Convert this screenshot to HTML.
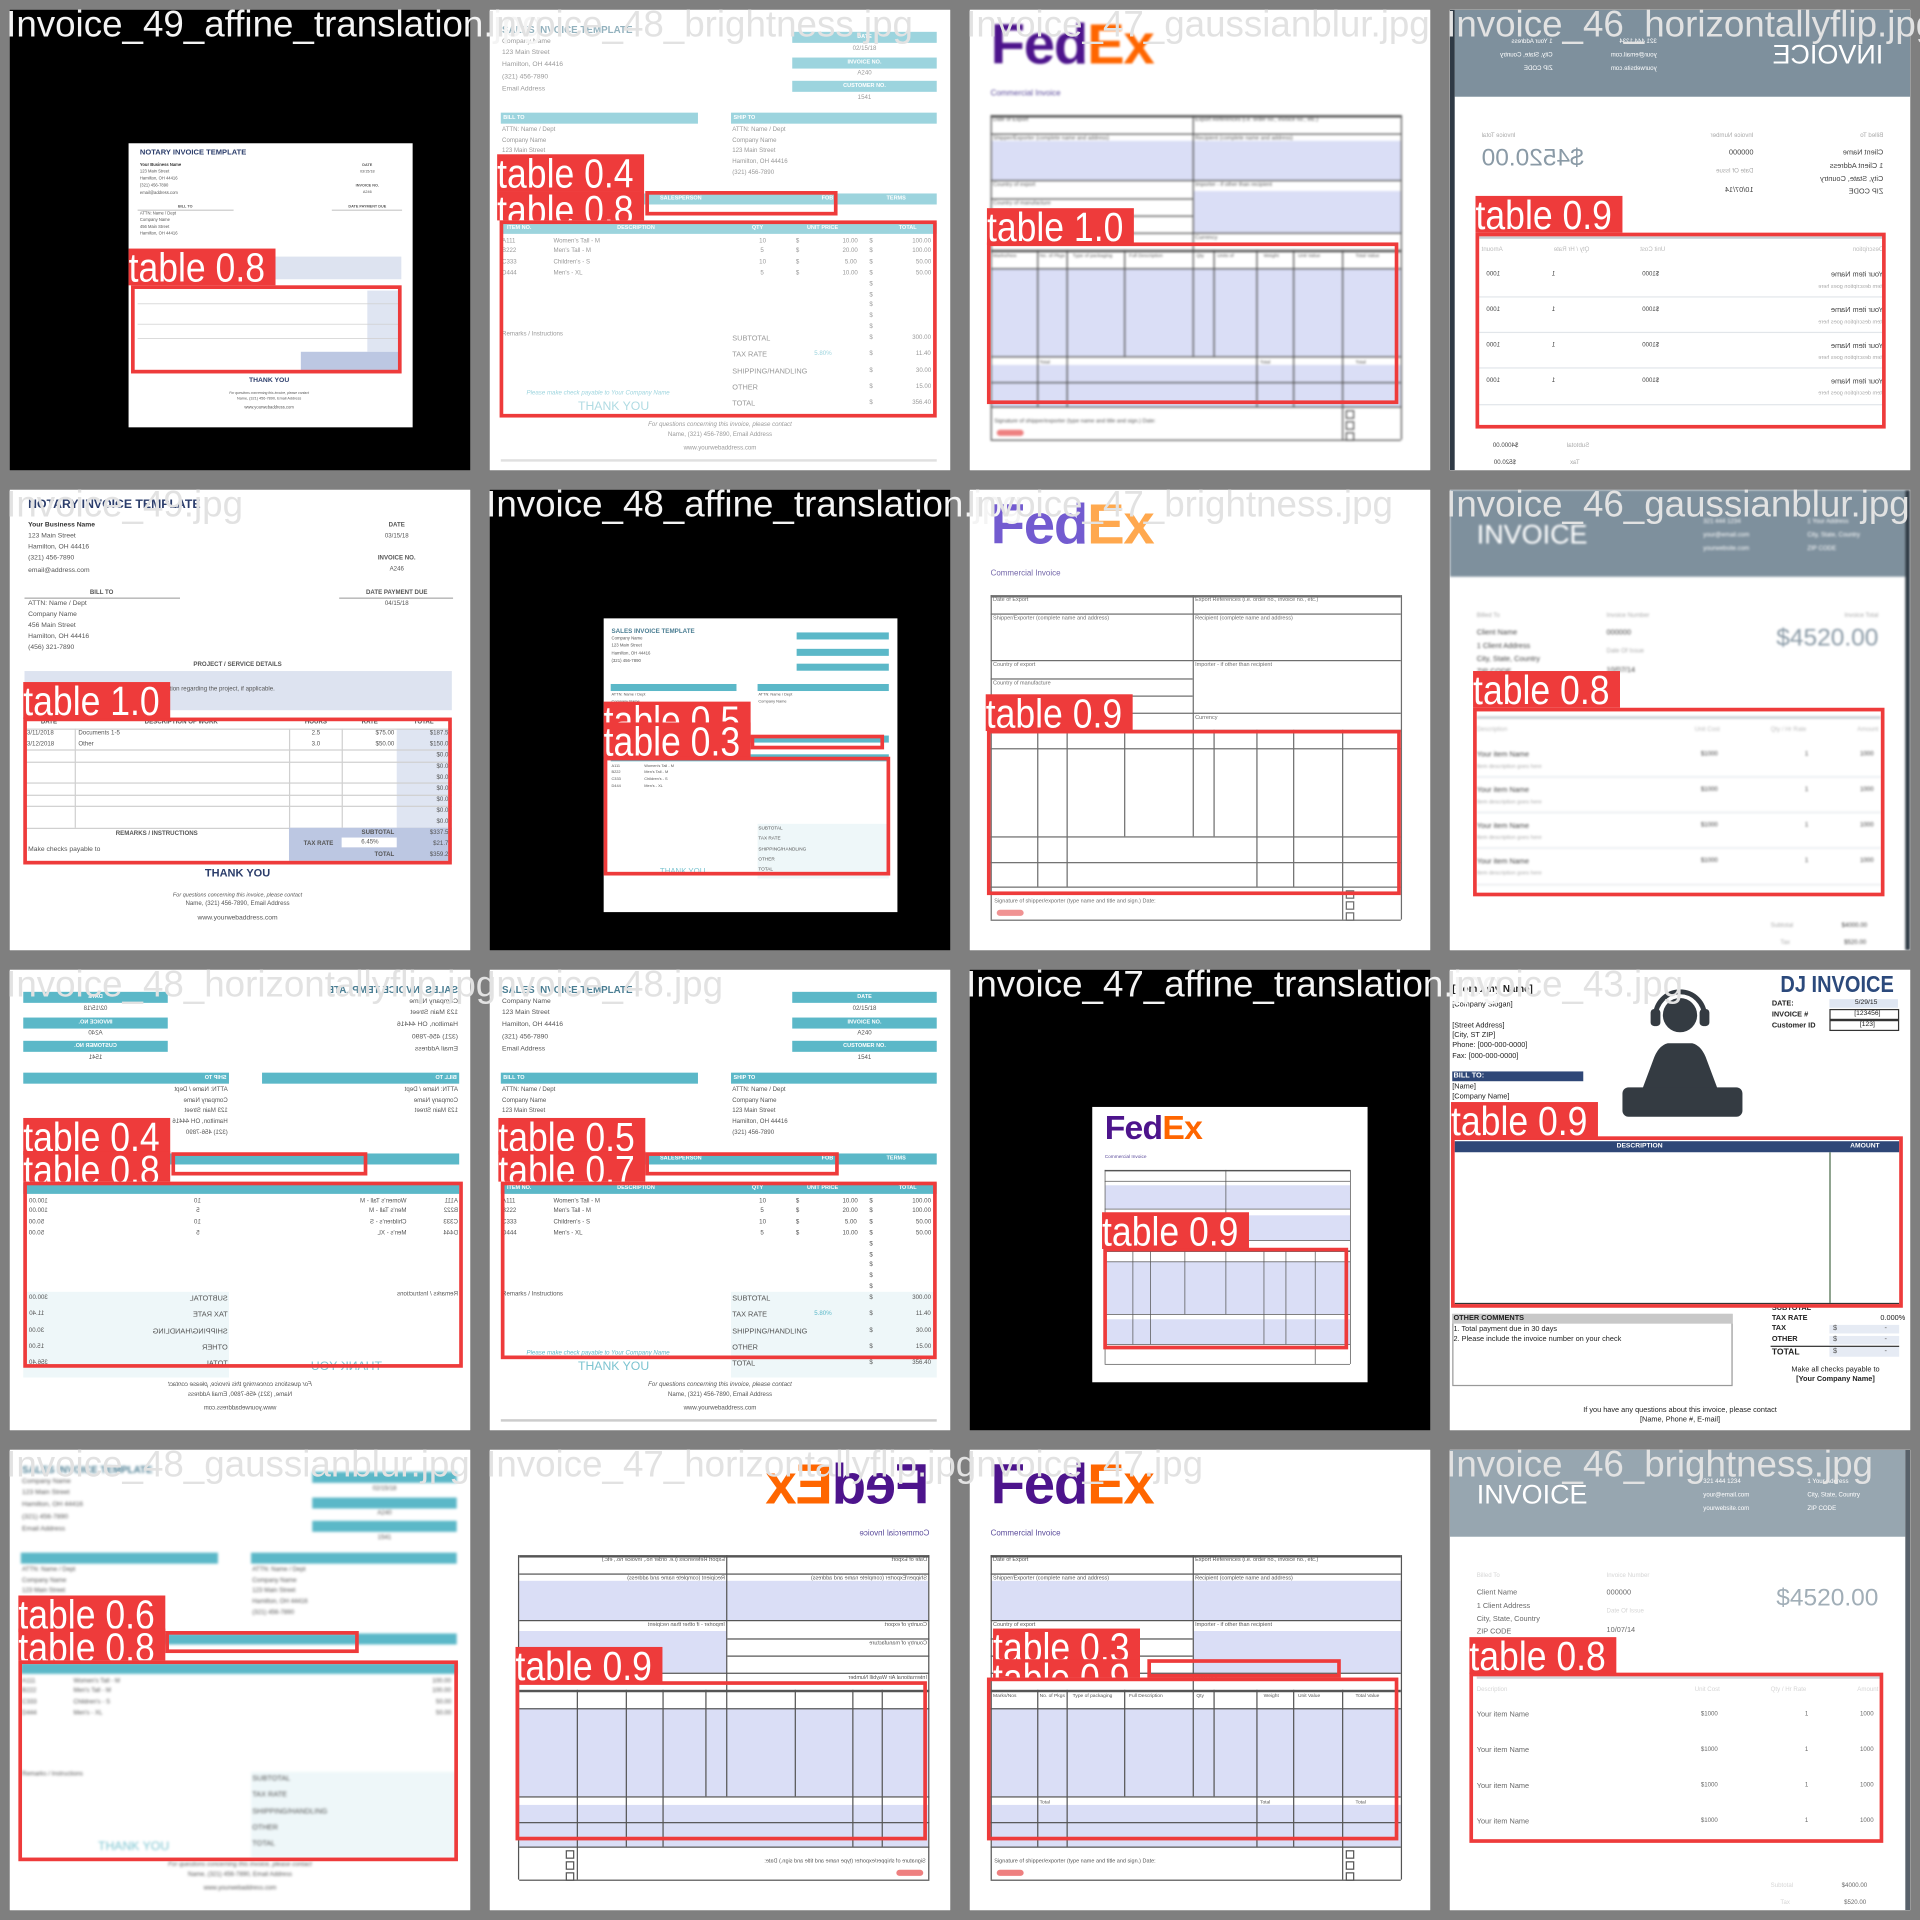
<!DOCTYPE html>
<html><head><meta charset="utf-8">
<style>
html,body{margin:0;padding:0;width:1920px;height:1920px;overflow:hidden;background:#7f7f7f}
#W{position:absolute;left:0;top:0;width:1568px;height:1568px;transform:scale(1.22449);transform-origin:0 0;background:#7f7f7f}
.cell{position:absolute;width:376px;height:376px;overflow:hidden;background:#fff}
.doc{position:absolute;left:0;top:0;width:376px;height:376px;background:#fff;overflow:hidden}
.t{position:absolute;white-space:nowrap;font-family:"Liberation Sans",sans-serif;font-size:5px;line-height:1;color:#555}
.c{transform:translateX(-50%)}
.r{position:absolute}
.bx{position:absolute;border:3px solid #ee3b3b;box-sizing:border-box}
.lab{position:absolute;width:120px;height:30px;background:#ee3b3b;overflow:hidden;color:#fff;font:33px/31px "Liberation Sans",sans-serif;white-space:nowrap}
.lab span{display:inline-block;transform:scaleX(.88);transform-origin:0 0}
.ttl{position:absolute;font:30px/1 "Liberation Sans",sans-serif;color:#e2e2e2;white-space:nowrap}
.tb{background:#5bb8c8}
.tb .t{color:#fff;font-weight:bold;font-size:4.5px}
.lav{background:#dadef6}
.ln{background:#555}
.g{background:#d0d0d0}
</style></head><body><div id="W">

<!-- ROW 0 -->
<div class="cell" style="left:8px;top:8px;background:#000">
 <div style="position:absolute;left:97px;top:109px;width:376px;height:376px;transform:scale(.617);transform-origin:0 0">
  <div class="doc">
   <div class="t" style="left:15px;top:8px;font-weight:bold;font-size:10px;color:#2b3d6b">NOTARY INVOICE TEMPLATE</div>
   <div class="t" style="left:15px;top:27px;font-weight:bold;font-size:5.5px;color:#333">Your Business Name</div>
   <div class="t" style="left:15px;top:36px;font-size:5.5px">123 Main Street</div>
   <div class="t" style="left:15px;top:45px;font-size:5.5px">Hamilton, OH 44416</div>
   <div class="t" style="left:15px;top:54px;font-size:5.5px">(321) 456-7890</div>
   <div class="t" style="left:15px;top:64px;font-size:5.5px">email@address.com</div>
   <div class="t c" style="left:316px;top:27px;font-weight:bold">DATE</div><div class="t c" style="left:316px;top:36px">03/15/18</div>
   <div class="t c" style="left:316px;top:54px;font-weight:bold">INVOICE NO.</div><div class="t c" style="left:316px;top:63px">A246</div>
   <div class="t c" style="left:75px;top:82px;font-weight:bold">BILL TO</div><div class="r" style="left:12px;top:88px;width:127px;height:1px;background:#aaa"></div>
   <div class="t c" style="left:316px;top:82px;font-weight:bold">DATE PAYMENT DUE</div><div class="r" style="left:269px;top:88px;width:93px;height:1px;background:#aaa"></div>
   <div class="t" style="left:15px;top:91px;font-size:5.5px">ATTN: Name / Dept</div>
   <div class="t" style="left:15px;top:100px;font-size:5.5px">Company Name</div>
   <div class="t" style="left:15px;top:109px;font-size:5.5px">456 Main Street</div>
   <div class="t" style="left:15px;top:118px;font-size:5.5px">Hamilton, OH 44416</div>
   <div class="r" style="left:12px;top:150px;width:349px;height:30px;background:#dde3f0"></div>
   <div class="r" style="left:316px;top:195px;width:45px;height:81px;background:#dfe5f2"></div>
   <div class="r g" style="left:12px;top:212px;width:349px;height:1px"></div>
   <div class="r g" style="left:12px;top:239px;width:349px;height:1px"></div>
   <div class="r g" style="left:12px;top:258px;width:349px;height:1px"></div>
   <div class="r" style="left:228px;top:276px;width:133px;height:27px;background:#bcc7e2"></div>
   <div class="t c" style="left:186px;top:309px;font-weight:bold;font-size:9px;color:#2b3d6b">THANK YOU</div>
   <div class="t c" style="left:186px;top:329px;font-style:italic;font-size:4.5px">For questions concerning this invoice, please contact</div>
   <div class="t c" style="left:186px;top:336px">Name, (321) 456-7890, Email Address</div>
   <div class="t c" style="left:186px;top:348px;font-size:5.5px">www.yourwebaddress.com</div>
  </div>
 </div>
 <div class="bx" style="left:99px;top:225px;width:221px;height:72px"></div>
 <div class="lab" style="left:97px;top:195px"><span>table 0.8</span></div>
</div>

<div class="cell" style="left:400px;top:8px">
 <div style="opacity:.6">
 <div class="doc">
  <div class="t" style="left:10px;top:13px;font-weight:bold;font-size:8px;color:#4a7d92">SALES INVOICE TEMPLATE</div>
  <div class="t" style="left:10px;top:24px;font-size:5.5px">Company Name</div>
  <div class="t" style="left:10px;top:33px;font-size:5.5px">123 Main Street</div>
  <div class="t" style="left:10px;top:43px;font-size:5.5px">Hamilton, OH 44416</div>
  <div class="t" style="left:10px;top:53px;font-size:5.5px">(321) 456-7890</div>
  <div class="t" style="left:10px;top:63px;font-size:5.5px">Email Address</div>
  <div class="r tb" style="left:247px;top:18px;width:118px;height:9px"><div class="t c" style="left:59px;top:2px">DATE</div></div>
  <div class="r tb" style="left:247px;top:39px;width:118px;height:9px"><div class="t c" style="left:59px;top:2px">INVOICE NO.</div></div>
  <div class="r tb" style="left:247px;top:58px;width:118px;height:9px"><div class="t c" style="left:59px;top:2px">CUSTOMER NO.</div></div>
  <div class="t c" style="left:306px;top:30px">02/15/18</div>
  <div class="t c" style="left:306px;top:50px">A240</div>
  <div class="t c" style="left:306px;top:70px">1541</div>
  <div class="r tb" style="left:9px;top:84px;width:161px;height:9px"><div class="t" style="left:2px;top:2px">BILL TO</div></div>
  <div class="r tb" style="left:197px;top:84px;width:168px;height:9px"><div class="t" style="left:2px;top:2px">SHIP TO</div></div>
  <div class="t" style="left:10px;top:96px">ATTN: Name / Dept</div><div class="t" style="left:198px;top:96px">ATTN: Name / Dept</div>
  <div class="t" style="left:10px;top:105px">Company Name</div><div class="t" style="left:198px;top:105px">Company Name</div>
  <div class="t" style="left:10px;top:113px">123 Main Street</div><div class="t" style="left:198px;top:113px">123 Main Street</div>
  <div class="t" style="left:198px;top:122px">Hamilton, OH 44416</div>
  <div class="t" style="left:198px;top:131px">(321) 456-7890</div>
  <div class="r tb" style="left:9px;top:150px;width:356px;height:9px"><div class="t" style="left:60px;top:2px">SHIP VIA</div><div class="t" style="left:130px;top:2px">SALESPERSON</div><div class="t" style="left:262px;top:2px">FOB</div><div class="t" style="left:315px;top:2px">TERMS</div></div>
  <div class="r tb" style="left:9px;top:174px;width:356px;height:9px"><div class="t" style="left:5px;top:2px">ITEM NO.</div><div class="t" style="left:95px;top:2px">DESCRIPTION</div><div class="t" style="left:205px;top:2px">QTY</div><div class="t" style="left:250px;top:2px">UNIT PRICE</div><div class="t" style="left:325px;top:2px">TOTAL</div></div>
  <div class="t" style="left:10px;top:187px">A111</div><div class="t" style="left:52px;top:187px">Women's Tall - M</div><div class="t" style="left:220px;top:187px">10</div><div class="t" style="left:250px;top:187px">$</div><div class="t" style="left:288px;top:187px">10.00</div><div class="t" style="left:310px;top:187px">$</div><div class="t" style="left:345px;top:187px">100.00</div>
  <div class="t" style="left:10px;top:195px">B222</div><div class="t" style="left:52px;top:195px">Men's Tall - M</div><div class="t" style="left:221px;top:195px">5</div><div class="t" style="left:250px;top:195px">$</div><div class="t" style="left:288px;top:195px">20.00</div><div class="t" style="left:310px;top:195px">$</div><div class="t" style="left:345px;top:195px">100.00</div>
  <div class="t" style="left:10px;top:204px">C333</div><div class="t" style="left:52px;top:204px">Children's - S</div><div class="t" style="left:220px;top:204px">10</div><div class="t" style="left:250px;top:204px">$</div><div class="t" style="left:290px;top:204px">5.00</div><div class="t" style="left:310px;top:204px">$</div><div class="t" style="left:348px;top:204px">50.00</div>
  <div class="t" style="left:10px;top:213px">D444</div><div class="t" style="left:52px;top:213px">Men's - XL</div><div class="t" style="left:221px;top:213px">5</div><div class="t" style="left:250px;top:213px">$</div><div class="t" style="left:288px;top:213px">10.00</div><div class="t" style="left:310px;top:213px">$</div><div class="t" style="left:348px;top:213px">50.00</div>
  <div class="t" style="left:310px;top:222px">$</div><div class="t" style="left:310px;top:231px">$</div><div class="t" style="left:310px;top:239px">$</div><div class="t" style="left:310px;top:248px">$</div><div class="t" style="left:310px;top:257px">$</div>
  <div class="t" style="left:10px;top:263px">Remarks / Instructions</div>
  <div class="t" style="left:198px;top:266px;font-size:6px">SUBTOTAL</div><div class="t" style="left:310px;top:266px">$</div><div class="t" style="left:345px;top:266px">300.00</div>
  <div class="t" style="left:198px;top:279px;font-size:6px">TAX RATE</div><div class="t" style="left:265px;top:279px;color:#5bb8c8">5.80%</div><div class="t" style="left:310px;top:279px">$</div><div class="t" style="left:348px;top:279px">11.40</div>
  <div class="t" style="left:198px;top:293px;font-size:6px">SHIPPING/HANDLING</div><div class="t" style="left:310px;top:293px">$</div><div class="t" style="left:348px;top:293px">30.00</div>
  <div class="t" style="left:198px;top:306px;font-size:6px">OTHER</div><div class="t" style="left:310px;top:306px">$</div><div class="t" style="left:348px;top:306px">15.00</div>
  <div class="t" style="left:198px;top:319px;font-size:6px">TOTAL</div><div class="t" style="left:310px;top:319px">$</div><div class="t" style="left:345px;top:319px">356.40</div>
  <div class="t" style="left:30px;top:311px;font-style:italic;color:#5bb8c8">Please make check payable to Your Company Name</div>
  <div class="t" style="left:72px;top:320px;font-size:10px;color:#7cc4d0">THANK YOU</div>
  <div class="t c" style="left:188px;top:337px;font-style:italic">For questions concerning this invoice, please contact</div>
  <div class="t c" style="left:188px;top:345px">Name, (321) 456-7890, Email Address</div>
  <div class="t c" style="left:188px;top:356px">www.yourwebaddress.com</div>
  <div class="r" style="left:9px;top:367px;width:356px;height:2px;background:#ccc"></div>
 </div></div>
 <div class="lab" style="left:6px;top:118px"><span>table 0.4</span></div>
 <div class="lab" style="left:6px;top:148px;height:24px"><span>table 0.8</span></div>
 <div class="bx" style="left:127px;top:148px;width:157px;height:20px"></div>
 <div class="bx" style="left:8px;top:172px;width:357px;height:161px"></div>
</div>

<div class="cell" style="left:792px;top:8px">
 <div class="doc" style="filter:blur(.9px)">
  <div class="t" style="left:17px;top:5px;font:bold 46px/1 'Liberation Sans',sans-serif;letter-spacing:-1px"><span style="color:#4d148c">Fed</span><span style="color:#ff6600">Ex</span></div>
  <div class="t" style="left:17px;top:66px;font-size:6.5px;color:#5a4a9a">Commercial Invoice</div>
  <div class="r lav" style="left:18px;top:107px;width:334px;height:32px"></div>
  <div class="r lav" style="left:183px;top:148px;width:169px;height:34px"></div>
  <div class="r lav" style="left:18px;top:211px;width:334px;height:72px"></div>
  <div class="r lav" style="left:18px;top:290px;width:334px;height:34px"></div>
  <div class="r ln" style="left:17px;top:86px;width:335px;height:2px"></div>
  <div class="r ln" style="left:17px;top:101px;width:335px;height:1px"></div>
  <div class="r ln" style="left:17px;top:139px;width:335px;height:1px"></div>
  <div class="r ln" style="left:17px;top:154px;width:165px;height:1px"></div>
  <div class="r ln" style="left:17px;top:168px;width:165px;height:1px"></div>
  <div class="r ln" style="left:17px;top:182px;width:335px;height:1px"></div>
  <div class="r ln" style="left:17px;top:196px;width:335px;height:2px"></div>
  <div class="r ln" style="left:17px;top:211px;width:335px;height:1px"></div>
  <div class="r ln" style="left:17px;top:283px;width:335px;height:1px"></div>
  <div class="r ln" style="left:17px;top:304px;width:335px;height:1px"></div>
  <div class="r ln" style="left:17px;top:324px;width:335px;height:1px"></div>
  <div class="r ln" style="left:17px;top:351px;width:335px;height:1px"></div>
  <div class="r ln" style="left:17px;top:86px;width:1px;height:265px"></div>
  <div class="r ln" style="left:352px;top:86px;width:1px;height:265px"></div>
  <div class="r ln" style="left:182px;top:86px;width:1px;height:197px"></div>
  <div class="r ln" style="left:55px;top:196px;width:1px;height:128px"></div>
  <div class="r ln" style="left:79px;top:196px;width:1px;height:128px"></div>
  <div class="r ln" style="left:126px;top:196px;width:1px;height:87px"></div>
  <div class="r ln" style="left:199px;top:196px;width:1px;height:87px"></div>
  <div class="r ln" style="left:234px;top:196px;width:1px;height:128px"></div>
  <div class="r ln" style="left:264px;top:196px;width:1px;height:128px"></div>
  <div class="r ln" style="left:304px;top:196px;width:1px;height:155px"></div>
  <div class="t" style="left:19px;top:88px;font-size:4.5px">Date of Export</div>
  <div class="t" style="left:184px;top:88px;font-size:4.5px">Export References (i.e. order no., invoice no., etc.)</div>
  <div class="t" style="left:19px;top:103px;font-size:4.5px">Shipper/Exporter (complete name and address)</div>
  <div class="t" style="left:184px;top:103px;font-size:4.5px">Recipient (complete name and address)</div>
  <div class="t" style="left:19px;top:141px;font-size:4.5px">Country of export</div>
  <div class="t" style="left:184px;top:141px;font-size:4.5px">Importer - if other than recipient</div>
  <div class="t" style="left:19px;top:156px;font-size:4.5px">Country of manufacture</div>
  <div class="t" style="left:19px;top:170px;font-size:4.5px">Country of ultimate destination</div>
  <div class="t" style="left:19px;top:184px;font-size:4.5px">International Air Waybill Number</div>
  <div class="t" style="left:184px;top:184px;font-size:4.5px">Currency</div>
  <div class="t" style="left:19px;top:199px;font-size:4px">Marks/Nos</div><div class="t" style="left:57px;top:199px;font-size:4px">No. of Pkgs</div><div class="t" style="left:84px;top:199px;font-size:4px">Type of packaging</div><div class="t" style="left:130px;top:199px;font-size:4px">Full Description</div><div class="t" style="left:185px;top:199px;font-size:4px">Qty</div><div class="t" style="left:202px;top:199px;font-size:4px">Units of</div><div class="t" style="left:240px;top:199px;font-size:4px">Weight</div><div class="t" style="left:268px;top:199px;font-size:4px">Unit Value</div><div class="t" style="left:315px;top:199px;font-size:4px">Total Value</div>
  <div class="t" style="left:57px;top:286px;font-size:4px">Total</div><div class="t" style="left:237px;top:286px;font-size:4px">Total</div><div class="t" style="left:315px;top:286px;font-size:4px">Total</div>
  <div class="t" style="left:20px;top:334px;font-size:4.5px">Signature of shipper/exporter (type name and title and sign.)  Date:</div>
  <div class="r" style="left:22px;top:343px;width:22px;height:5px;border-radius:3px;background:#ee8080"></div>
  <div class="r" style="left:307px;top:327px;width:5px;height:5px;border:1px solid #555"></div>
  <div class="r" style="left:307px;top:336px;width:5px;height:5px;border:1px solid #555"></div>
  <div class="r" style="left:307px;top:345px;width:5px;height:5px;border:1px solid #555"></div>
 </div>
 <div class="bx" style="left:14px;top:190px;width:336px;height:132px"></div>
 <div class="lab" style="left:14px;top:162px"><span>table 1.0</span></div>
</div>

<div class="cell" style="left:1184px;top:8px">
 <div style="position:absolute;left:0;top:0;width:376px;height:376px;transform:scaleX(-1)">
 <div class="doc">
  <div class="r" style="left:0;top:0;width:372px;height:71px;background:#7e909d"></div>
  <div class="r" style="left:372px;top:0;width:4px;height:376px;background:#2f3a45"></div>
  <div class="t" style="left:22px;top:26px;font-size:22px;color:#fff">INVOICE</div>
  <div class="t" style="left:207px;top:24px;color:#fff">321 444 1234</div><div class="t" style="left:207px;top:35px;color:#fff">your@email.com</div><div class="t" style="left:207px;top:46px;color:#fff">yourwebsite.com</div>
  <div class="t" style="left:292px;top:24px;color:#fff">1 Your Address</div><div class="t" style="left:292px;top:35px;color:#fff">City, State, Country</div><div class="t" style="left:292px;top:46px;color:#fff">ZIP CODE</div>
  <div class="t" style="left:22px;top:101px;color:#aaa">Billed To</div><div class="t" style="left:22px;top:114px;font-size:6px;color:#444">Client Name</div><div class="t" style="left:22px;top:125px;font-size:6px;color:#444">1 Client Address</div><div class="t" style="left:22px;top:136px;font-size:6px;color:#444">City, State, Country</div><div class="t" style="left:22px;top:146px;font-size:6px;color:#444">ZIP CODE</div>
  <div class="t" style="left:128px;top:101px;color:#aaa">Invoice Number</div><div class="t" style="left:128px;top:114px;font-size:6px;color:#444">000000</div><div class="t" style="left:128px;top:130px;color:#aaa">Date Of Issue</div><div class="t" style="left:128px;top:145px;font-size:6px;color:#444">10/07/14</div>
  <div class="t" style="right:26px;top:101px;color:#aaa">Invoice Total</div>
  <div class="t" style="right:26px;top:111px;font-size:20px;color:#8a9aa6">$4520.00</div>
  <div class="r" style="left:22px;top:185px;width:330px;height:2px;background:#c6ced4"></div>
  <div class="t" style="left:22px;top:194px;color:#bbb">Description</div><div class="t" style="left:200px;top:194px;color:#bbb">Unit Cost</div><div class="t" style="left:262px;top:194px;color:#bbb">Qty / Hr Rate</div><div class="t" style="right:26px;top:194px;color:#bbb">Amount</div>
  <div class="t" style="left:22px;top:214px;font-size:6px;color:#444">Your item Name</div><div class="t" style="left:22px;top:224px;font-size:4.5px;color:#aaa">Item description goes here</div><div class="t" style="left:205px;top:214px;color:#444">$1000</div><div class="t" style="left:290px;top:214px;color:#444">1</div><div class="t" style="left:335px;top:214px;color:#444">1000</div>
  <div class="r" style="left:22px;top:234px;width:330px;height:1px;background:#e2e6ea"></div>
  <div class="t" style="left:22px;top:243px;font-size:6px;color:#444">Your item Name</div><div class="t" style="left:22px;top:253px;font-size:4.5px;color:#aaa">Item description goes here</div><div class="t" style="left:205px;top:243px;color:#444">$1000</div><div class="t" style="left:290px;top:243px;color:#444">1</div><div class="t" style="left:335px;top:243px;color:#444">1000</div>
  <div class="r" style="left:22px;top:263px;width:330px;height:1px;background:#e2e6ea"></div>
  <div class="t" style="left:22px;top:272px;font-size:6px;color:#444">Your item Name</div><div class="t" style="left:22px;top:282px;font-size:4.5px;color:#aaa">Item description goes here</div><div class="t" style="left:205px;top:272px;color:#444">$1000</div><div class="t" style="left:290px;top:272px;color:#444">1</div><div class="t" style="left:335px;top:272px;color:#444">1000</div>
  <div class="r" style="left:22px;top:292px;width:330px;height:1px;background:#e2e6ea"></div>
  <div class="t" style="left:22px;top:301px;font-size:6px;color:#444">Your item Name</div><div class="t" style="left:22px;top:311px;font-size:4.5px;color:#aaa">Item description goes here</div><div class="t" style="left:205px;top:301px;color:#444">$1000</div><div class="t" style="left:290px;top:301px;color:#444">1</div><div class="t" style="left:335px;top:301px;color:#444">1000</div>
  <div class="r" style="left:22px;top:322px;width:330px;height:1px;background:#e2e6ea"></div>
  <div class="t" style="left:262px;top:354px;color:#aaa">Subtotal</div><div class="t" style="left:320px;top:354px;color:#444">$4000.00</div>
  <div class="t" style="left:270px;top:368px;color:#aaa">Tax</div><div class="t" style="left:322px;top:368px;color:#444">$520.00</div>
 </div></div>
 <div class="bx" style="left:21px;top:182px;width:335px;height:160px"></div>
 <div class="lab" style="left:21px;top:152px"><span>table 0.9</span></div>
</div>

<!-- ROW 1 -->
<div class="cell" style="left:8px;top:400px">
 <div class="doc">
  <div class="t" style="left:15px;top:8px;font-weight:bold;font-size:10px;color:#2b3d6b">NOTARY INVOICE TEMPLATE</div>
  <div class="t" style="left:15px;top:27px;font-weight:bold;font-size:5.5px;color:#333">Your Business Name</div>
  <div class="t" style="left:15px;top:36px;font-size:5.5px">123 Main Street</div>
  <div class="t" style="left:15px;top:45px;font-size:5.5px">Hamilton, OH 44416</div>
  <div class="t" style="left:15px;top:54px;font-size:5.5px">(321) 456-7890</div>
  <div class="t" style="left:15px;top:64px;font-size:5.5px">email@address.com</div>
  <div class="t c" style="left:316px;top:27px;font-weight:bold">DATE</div><div class="t c" style="left:316px;top:36px">03/15/18</div>
  <div class="t c" style="left:316px;top:54px;font-weight:bold">INVOICE NO.</div><div class="t c" style="left:316px;top:63px">A246</div>
  <div class="t c" style="left:75px;top:82px;font-weight:bold">BILL TO</div><div class="r" style="left:12px;top:88px;width:127px;height:1px;background:#aaa"></div>
  <div class="t c" style="left:316px;top:82px;font-weight:bold">DATE PAYMENT DUE</div><div class="r" style="left:269px;top:88px;width:93px;height:1px;background:#aaa"></div>
  <div class="t c" style="left:316px;top:91px">04/15/18</div>
  <div class="t" style="left:15px;top:91px;font-size:5.5px">ATTN: Name / Dept</div>
  <div class="t" style="left:15px;top:100px;font-size:5.5px">Company Name</div>
  <div class="t" style="left:15px;top:109px;font-size:5.5px">456 Main Street</div>
  <div class="t" style="left:15px;top:118px;font-size:5.5px">Hamilton, OH 44416</div>
  <div class="t" style="left:15px;top:127px;font-size:5.5px">(456) 321-7890</div>
  <div class="t c" style="left:186px;top:141px;font-weight:bold">PROJECT / SERVICE DETAILS</div>
  <div class="r" style="left:12px;top:148px;width:349px;height:32px;background:#dde3f0"></div>
  <div class="t" style="left:100px;top:161px">Insert information regarding the project, if applicable.</div>
  <div class="t c" style="left:32px;top:188px;font-weight:bold">DATE</div><div class="t c" style="left:140px;top:188px;font-weight:bold">DESCRIPTION OF WORK</div><div class="t c" style="left:250px;top:188px;font-weight:bold">HOURS</div><div class="t c" style="left:294px;top:188px;font-weight:bold">RATE</div><div class="t c" style="left:338px;top:188px;font-weight:bold">TOTAL</div>
  <div class="r" style="left:316px;top:195px;width:45px;height:81px;background:#dfe5f2"></div>
  <div class="r g" style="left:12px;top:195px;width:349px;height:1px"></div>
  <div class="r g" style="left:12px;top:212px;width:349px;height:1px"></div>
  <div class="r g" style="left:12px;top:222px;width:349px;height:1px"></div>
  <div class="r g" style="left:12px;top:239px;width:349px;height:1px"></div>
  <div class="r g" style="left:12px;top:249px;width:349px;height:1px"></div>
  <div class="r g" style="left:12px;top:258px;width:349px;height:1px"></div>
  <div class="r g" style="left:12px;top:276px;width:349px;height:1px"></div>
  <div class="r g" style="left:53px;top:195px;width:1px;height:81px"></div>
  <div class="r g" style="left:228px;top:195px;width:1px;height:81px"></div>
  <div class="r g" style="left:271px;top:195px;width:1px;height:81px"></div>
  <div class="t" style="left:14px;top:197px">3/11/2018</div><div class="t" style="left:56px;top:197px">Documents 1-5</div><div class="t c" style="left:250px;top:197px">2.5</div><div class="t" style="right:62px;top:197px">$75.00</div><div class="t" style="right:15px;top:197px">$187.50</div>
  <div class="t" style="left:14px;top:206px">3/12/2018</div><div class="t" style="left:56px;top:206px">Other</div><div class="t c" style="left:250px;top:206px">3.0</div><div class="t" style="right:62px;top:206px">$50.00</div><div class="t" style="right:15px;top:206px">$150.00</div>
  <div class="t" style="right:15px;top:215px">$0.00</div><div class="t" style="right:15px;top:224px">$0.00</div><div class="t" style="right:15px;top:233px">$0.00</div><div class="t" style="right:15px;top:242px">$0.00</div><div class="t" style="right:15px;top:251px">$0.00</div><div class="t" style="right:15px;top:260px">$0.00</div><div class="t" style="right:15px;top:269px">$0.00</div>
  <div class="r" style="left:228px;top:276px;width:133px;height:27px;background:#bcc7e2"></div>
  <div class="r" style="left:271px;top:284px;width:45px;height:8px;background:#fff"></div>
  <div class="t" style="right:62px;top:278px;font-weight:bold">SUBTOTAL</div><div class="t" style="left:240px;top:287px;font-weight:bold">TAX RATE</div><div class="t" style="left:287px;top:286px">6.45%</div><div class="t" style="right:62px;top:296px;font-weight:bold">TOTAL</div>
  <div class="t" style="right:15px;top:278px">$337.50</div><div class="t" style="right:15px;top:287px">$21.77</div><div class="t" style="right:15px;top:296px">$359.27</div>
  <div class="t c" style="left:120px;top:279px;font-weight:bold">REMARKS / INSTRUCTIONS</div>
  <div class="t" style="left:15px;top:292px;font-size:5.5px">Make checks payable to</div>
  <div class="t c" style="left:186px;top:309px;font-weight:bold;font-size:9px;color:#2b3d6b">THANK YOU</div>
  <div class="t c" style="left:186px;top:329px;font-style:italic;font-size:4.5px">For questions concerning this invoice, please contact</div>
  <div class="t c" style="left:186px;top:336px">Name, (321) 456-7890, Email Address</div>
  <div class="t c" style="left:186px;top:348px;font-size:5.5px">www.yourwebaddress.com</div>
 </div>
 <div class="bx" style="left:11px;top:186px;width:350px;height:120px"></div>
 <div class="lab" style="left:11px;top:157px"><span>table 1.0</span></div>
</div>

<div class="cell" style="left:400px;top:400px;background:#000">
 <div style="position:absolute;left:93px;top:105px;width:376px;height:376px;transform:scale(.638);transform-origin:0 0">
 <div class="doc">
  <div class="t" style="left:10px;top:13px;font-weight:bold;font-size:8px;color:#4a7d92">SALES INVOICE TEMPLATE</div>
  <div class="t" style="left:10px;top:24px;font-size:5.5px">Company Name</div>
  <div class="t" style="left:10px;top:33px;font-size:5.5px">123 Main Street</div>
  <div class="t" style="left:10px;top:43px;font-size:5.5px">Hamilton, OH 44416</div>
  <div class="t" style="left:10px;top:53px;font-size:5.5px">(321) 456-7890</div>
  <div class="r tb" style="left:247px;top:18px;width:118px;height:9px"></div>
  <div class="r tb" style="left:247px;top:39px;width:118px;height:9px"></div>
  <div class="r tb" style="left:247px;top:58px;width:118px;height:9px"></div>
  <div class="r tb" style="left:9px;top:84px;width:161px;height:9px"></div>
  <div class="r tb" style="left:197px;top:84px;width:168px;height:9px"></div>
  <div class="t" style="left:10px;top:96px">ATTN: Name / Dept</div><div class="t" style="left:198px;top:96px">ATTN: Name / Dept</div>
  <div class="t" style="left:10px;top:105px">Company Name</div><div class="t" style="left:198px;top:105px">Company Name</div>
  <div class="r tb" style="left:9px;top:150px;width:356px;height:9px"></div>
  <div class="r tb" style="left:9px;top:174px;width:356px;height:9px"></div>
  <div class="t" style="left:10px;top:187px">A111</div><div class="t" style="left:52px;top:187px">Women's Tall - M</div>
  <div class="t" style="left:10px;top:195px">B222</div><div class="t" style="left:52px;top:195px">Men's Tall - M</div>
  <div class="t" style="left:10px;top:204px">C333</div><div class="t" style="left:52px;top:204px">Children's - S</div>
  <div class="t" style="left:10px;top:213px">D444</div><div class="t" style="left:52px;top:213px">Men's - XL</div>
  <div class="r" style="left:197px;top:263px;width:168px;height:70px;background:#eef7f9"></div>
  <div class="t" style="left:198px;top:266px;font-size:6px">SUBTOTAL</div><div class="t" style="left:198px;top:279px;font-size:6px">TAX RATE</div><div class="t" style="left:198px;top:293px;font-size:6px">SHIPPING/HANDLING</div><div class="t" style="left:198px;top:306px;font-size:6px">OTHER</div><div class="t" style="left:198px;top:319px;font-size:6px">TOTAL</div>
  <div class="t" style="left:72px;top:320px;font-size:10px;color:#7cc4d0">THANK YOU</div>
 </div></div>
 <div class="lab" style="left:93px;top:173px"><span>table 0.5</span></div>
 <div class="lab" style="left:93px;top:190px"><span>table 0.3</span></div>
 <div class="bx" style="left:213px;top:200px;width:109px;height:12px"></div>
 <div class="bx" style="left:93px;top:218px;width:234px;height:97px"></div>
</div>

<div class="cell" style="left:792px;top:400px">
 <div class="doc" style="opacity:.85">
  <div class="t" style="left:17px;top:5px;font:bold 46px/1 'Liberation Sans',sans-serif;letter-spacing:-1px"><span style="color:#5b3fc8">Fed</span><span style="color:#ff9a30">Ex</span></div>
  <div class="t" style="left:17px;top:66px;font-size:6.5px;color:#5a4a9a">Commercial Invoice</div>
  <div class="r ln" style="left:17px;top:86px;width:335px;height:2px"></div>
  <div class="r ln" style="left:17px;top:101px;width:335px;height:1px"></div>
  <div class="r ln" style="left:17px;top:139px;width:335px;height:1px"></div>
  <div class="r ln" style="left:17px;top:154px;width:165px;height:1px"></div>
  <div class="r ln" style="left:17px;top:168px;width:165px;height:1px"></div>
  <div class="r ln" style="left:17px;top:182px;width:335px;height:1px"></div>
  <div class="r ln" style="left:17px;top:196px;width:335px;height:2px"></div>
  <div class="r ln" style="left:17px;top:211px;width:335px;height:1px"></div>
  <div class="r ln" style="left:17px;top:283px;width:335px;height:1px"></div>
  <div class="r ln" style="left:17px;top:304px;width:335px;height:1px"></div>
  <div class="r ln" style="left:17px;top:324px;width:335px;height:1px"></div>
  <div class="r ln" style="left:17px;top:351px;width:335px;height:1px"></div>
  <div class="r ln" style="left:17px;top:86px;width:1px;height:265px"></div>
  <div class="r ln" style="left:352px;top:86px;width:1px;height:265px"></div>
  <div class="r ln" style="left:182px;top:86px;width:1px;height:197px"></div>
  <div class="r ln" style="left:55px;top:196px;width:1px;height:128px"></div>
  <div class="r ln" style="left:79px;top:196px;width:1px;height:128px"></div>
  <div class="r ln" style="left:126px;top:196px;width:1px;height:87px"></div>
  <div class="r ln" style="left:199px;top:196px;width:1px;height:87px"></div>
  <div class="r ln" style="left:234px;top:196px;width:1px;height:128px"></div>
  <div class="r ln" style="left:264px;top:196px;width:1px;height:128px"></div>
  <div class="r ln" style="left:304px;top:196px;width:1px;height:155px"></div>
  <div class="t" style="left:19px;top:88px;font-size:4.5px">Date of Export</div>
  <div class="t" style="left:184px;top:88px;font-size:4.5px">Export References (i.e. order no., invoice no., etc.)</div>
  <div class="t" style="left:19px;top:103px;font-size:4.5px">Shipper/Exporter (complete name and address)</div>
  <div class="t" style="left:184px;top:103px;font-size:4.5px">Recipient (complete name and address)</div>
  <div class="t" style="left:19px;top:141px;font-size:4.5px">Country of export</div>
  <div class="t" style="left:184px;top:141px;font-size:4.5px">Importer - if other than recipient</div>
  <div class="t" style="left:19px;top:156px;font-size:4.5px">Country of manufacture</div>
  <div class="t" style="left:184px;top:184px;font-size:4.5px">Currency</div>
  <div class="t" style="left:20px;top:334px;font-size:4.5px">Signature of shipper/exporter (type name and title and sign.)  Date:</div>
  <div class="r" style="left:22px;top:343px;width:22px;height:5px;border-radius:3px;background:#ee8080"></div>
  <div class="r" style="left:307px;top:327px;width:5px;height:5px;border:1px solid #555"></div>
  <div class="r" style="left:307px;top:336px;width:5px;height:5px;border:1px solid #555"></div>
  <div class="r" style="left:307px;top:345px;width:5px;height:5px;border:1px solid #555"></div>
 </div>
 <div class="bx" style="left:14px;top:196px;width:338px;height:135px"></div>
 <div class="lab" style="left:13px;top:167px"><span>table 0.9</span></div>
</div>

<div class="cell" style="left:1184px;top:400px">
 <div class="doc" style="filter:blur(.8px)">
  <div class="r" style="left:0;top:0;width:372px;height:71px;background:#7e909d"></div>
  <div class="r" style="left:372px;top:0;width:4px;height:376px;background:#2f3a45"></div>
  <div class="t" style="left:22px;top:26px;font-size:22px;color:#fff">INVOICE</div>
  <div class="t" style="left:207px;top:24px;color:#fff">321 444 1234</div><div class="t" style="left:207px;top:35px;color:#fff">your@email.com</div><div class="t" style="left:207px;top:46px;color:#fff">yourwebsite.com</div>
  <div class="t" style="left:292px;top:24px;color:#fff">1 Your Address</div><div class="t" style="left:292px;top:35px;color:#fff">City, State, Country</div><div class="t" style="left:292px;top:46px;color:#fff">ZIP CODE</div>
  <div class="t" style="left:22px;top:101px;color:#aaa">Billed To</div><div class="t" style="left:22px;top:114px;font-size:6px;color:#444">Client Name</div><div class="t" style="left:22px;top:125px;font-size:6px;color:#444">1 Client Address</div><div class="t" style="left:22px;top:136px;font-size:6px;color:#444">City, State, Country</div><div class="t" style="left:22px;top:146px;font-size:6px;color:#444">ZIP CODE</div>
  <div class="t" style="left:128px;top:101px;color:#aaa">Invoice Number</div><div class="t" style="left:128px;top:114px;font-size:6px;color:#444">000000</div><div class="t" style="left:128px;top:130px;color:#aaa">Date Of Issue</div><div class="t" style="left:128px;top:145px;font-size:6px;color:#444">10/07/14</div>
  <div class="t" style="right:26px;top:101px;color:#aaa">Invoice Total</div>
  <div class="t" style="right:26px;top:111px;font-size:20px;color:#8a9aa6">$4520.00</div>
  <div class="r" style="left:22px;top:185px;width:330px;height:2px;background:#c6ced4"></div>
  <div class="t" style="left:22px;top:194px;color:#bbb">Description</div><div class="t" style="left:200px;top:194px;color:#bbb">Unit Cost</div><div class="t" style="left:262px;top:194px;color:#bbb">Qty / Hr Rate</div><div class="t" style="right:26px;top:194px;color:#bbb">Amount</div>
  <div class="t" style="left:22px;top:214px;font-size:6px;color:#444">Your item Name</div><div class="t" style="left:22px;top:224px;font-size:4.5px;color:#aaa">Item description goes here</div><div class="t" style="left:205px;top:214px;color:#444">$1000</div><div class="t" style="left:290px;top:214px;color:#444">1</div><div class="t" style="left:335px;top:214px;color:#444">1000</div>
  <div class="r" style="left:22px;top:234px;width:330px;height:1px;background:#e2e6ea"></div>
  <div class="t" style="left:22px;top:243px;font-size:6px;color:#444">Your item Name</div><div class="t" style="left:22px;top:253px;font-size:4.5px;color:#aaa">Item description goes here</div><div class="t" style="left:205px;top:243px;color:#444">$1000</div><div class="t" style="left:290px;top:243px;color:#444">1</div><div class="t" style="left:335px;top:243px;color:#444">1000</div>
  <div class="r" style="left:22px;top:263px;width:330px;height:1px;background:#e2e6ea"></div>
  <div class="t" style="left:22px;top:272px;font-size:6px;color:#444">Your item Name</div><div class="t" style="left:22px;top:282px;font-size:4.5px;color:#aaa">Item description goes here</div><div class="t" style="left:205px;top:272px;color:#444">$1000</div><div class="t" style="left:290px;top:272px;color:#444">1</div><div class="t" style="left:335px;top:272px;color:#444">1000</div>
  <div class="r" style="left:22px;top:292px;width:330px;height:1px;background:#e2e6ea"></div>
  <div class="t" style="left:22px;top:301px;font-size:6px;color:#444">Your item Name</div><div class="t" style="left:22px;top:311px;font-size:4.5px;color:#aaa">Item description goes here</div><div class="t" style="left:205px;top:301px;color:#444">$1000</div><div class="t" style="left:290px;top:301px;color:#444">1</div><div class="t" style="left:335px;top:301px;color:#444">1000</div>
  <div class="r" style="left:22px;top:322px;width:330px;height:1px;background:#e2e6ea"></div>
  <div class="t" style="left:262px;top:354px;color:#aaa">Subtotal</div><div class="t" style="left:320px;top:354px;color:#444">$4000.00</div>
  <div class="t" style="left:270px;top:368px;color:#aaa">Tax</div><div class="t" style="left:322px;top:368px;color:#444">$520.00</div>
 </div>
 <div class="bx" style="left:19px;top:178px;width:336px;height:154px"></div>
 <div class="lab" style="left:19px;top:148px"><span>table 0.8</span></div>
</div>

<!-- ROW 2 -->
<div class="cell" style="left:8px;top:792px">
 <div style="position:absolute;left:0;top:0;width:376px;height:376px;transform:scaleX(-1)">
 <div class="doc">
  <div class="t" style="left:10px;top:13px;font-weight:bold;font-size:8px;color:#4a7d92">SALES INVOICE TEMPLATE</div>
  <div class="t" style="left:10px;top:24px;font-size:5.5px">Company Name</div>
  <div class="t" style="left:10px;top:33px;font-size:5.5px">123 Main Street</div>
  <div class="t" style="left:10px;top:43px;font-size:5.5px">Hamilton, OH 44416</div>
  <div class="t" style="left:10px;top:53px;font-size:5.5px">(321) 456-7890</div>
  <div class="t" style="left:10px;top:63px;font-size:5.5px">Email Address</div>
  <div class="r tb" style="left:247px;top:18px;width:118px;height:9px"><div class="t c" style="left:59px;top:2px">DATE</div></div>
  <div class="r tb" style="left:247px;top:39px;width:118px;height:9px"><div class="t c" style="left:59px;top:2px">INVOICE NO.</div></div>
  <div class="r tb" style="left:247px;top:58px;width:118px;height:9px"><div class="t c" style="left:59px;top:2px">CUSTOMER NO.</div></div>
  <div class="t c" style="left:306px;top:30px">02/15/18</div><div class="t c" style="left:306px;top:50px">A240</div><div class="t c" style="left:306px;top:70px">1541</div>
  <div class="r tb" style="left:9px;top:84px;width:161px;height:9px"><div class="t" style="left:2px;top:2px">BILL TO</div></div>
  <div class="r tb" style="left:197px;top:84px;width:168px;height:9px"><div class="t" style="left:2px;top:2px">SHIP TO</div></div>
  <div class="t" style="left:10px;top:96px">ATTN: Name / Dept</div><div class="t" style="left:198px;top:96px">ATTN: Name / Dept</div>
  <div class="t" style="left:10px;top:105px">Company Name</div><div class="t" style="left:198px;top:105px">Company Name</div>
  <div class="t" style="left:10px;top:113px">123 Main Street</div><div class="t" style="left:198px;top:113px">123 Main Street</div>
  <div class="t" style="left:198px;top:122px">Hamilton, OH 44416</div><div class="t" style="left:198px;top:131px">(321) 456-7890</div>
  <div class="r tb" style="left:9px;top:150px;width:356px;height:9px"></div>
  <div class="r tb" style="left:9px;top:174px;width:356px;height:9px"></div>
  <div class="t" style="left:10px;top:187px">A111</div><div class="t" style="left:52px;top:187px">Women's Tall - M</div><div class="t" style="left:220px;top:187px">10</div><div class="t" style="left:345px;top:187px">100.00</div>
  <div class="t" style="left:10px;top:195px">B222</div><div class="t" style="left:52px;top:195px">Men's Tall - M</div><div class="t" style="left:221px;top:195px">5</div><div class="t" style="left:345px;top:195px">100.00</div>
  <div class="t" style="left:10px;top:204px">C333</div><div class="t" style="left:52px;top:204px">Children's - S</div><div class="t" style="left:220px;top:204px">10</div><div class="t" style="left:348px;top:204px">50.00</div>
  <div class="t" style="left:10px;top:213px">D444</div><div class="t" style="left:52px;top:213px">Men's - XL</div><div class="t" style="left:221px;top:213px">5</div><div class="t" style="left:348px;top:213px">50.00</div>
  <div class="t" style="left:10px;top:263px">Remarks / Instructions</div>
  <div class="r" style="left:197px;top:263px;width:168px;height:70px;background:#eef7f9"></div>
  <div class="t" style="left:198px;top:266px;font-size:6px">SUBTOTAL</div><div class="t" style="left:345px;top:266px">300.00</div>
  <div class="t" style="left:198px;top:279px;font-size:6px">TAX RATE</div><div class="t" style="left:348px;top:279px">11.40</div>
  <div class="t" style="left:198px;top:293px;font-size:6px">SHIPPING/HANDLING</div><div class="t" style="left:348px;top:293px">30.00</div>
  <div class="t" style="left:198px;top:306px;font-size:6px">OTHER</div><div class="t" style="left:348px;top:306px">15.00</div>
  <div class="t" style="left:198px;top:319px;font-size:6px">TOTAL</div><div class="t" style="left:345px;top:319px">356.40</div>
  <div class="t" style="left:72px;top:320px;font-size:10px;color:#7cc4d0">THANK YOU</div>
  <div class="t c" style="left:188px;top:337px;font-style:italic">For questions concerning this invoice, please contact</div>
  <div class="t c" style="left:188px;top:345px">Name, (321) 456-7890, Email Address</div>
  <div class="t c" style="left:188px;top:356px">www.yourwebaddress.com</div>
 </div></div>
 <div class="lab" style="left:11px;top:121px"><span>table 0.4</span></div>
 <div class="lab" style="left:11px;top:148px;height:25px"><span>table 0.8</span></div>
 <div class="bx" style="left:132px;top:149px;width:160px;height:19px"></div>
 <div class="bx" style="left:11px;top:173px;width:359px;height:152px"></div>
</div>

<div class="cell" style="left:400px;top:792px">
 <div class="doc">
  <div class="t" style="left:10px;top:13px;font-weight:bold;font-size:8px;color:#4a7d92">SALES INVOICE TEMPLATE</div>
  <div class="t" style="left:10px;top:24px;font-size:5.5px">Company Name</div>
  <div class="t" style="left:10px;top:33px;font-size:5.5px">123 Main Street</div>
  <div class="t" style="left:10px;top:43px;font-size:5.5px">Hamilton, OH 44416</div>
  <div class="t" style="left:10px;top:53px;font-size:5.5px">(321) 456-7890</div>
  <div class="t" style="left:10px;top:63px;font-size:5.5px">Email Address</div>
  <div class="r tb" style="left:247px;top:18px;width:118px;height:9px"><div class="t c" style="left:59px;top:2px">DATE</div></div>
  <div class="r tb" style="left:247px;top:39px;width:118px;height:9px"><div class="t c" style="left:59px;top:2px">INVOICE NO.</div></div>
  <div class="r tb" style="left:247px;top:58px;width:118px;height:9px"><div class="t c" style="left:59px;top:2px">CUSTOMER NO.</div></div>
  <div class="t c" style="left:306px;top:30px">02/15/18</div><div class="t c" style="left:306px;top:50px">A240</div><div class="t c" style="left:306px;top:70px">1541</div>
  <div class="r tb" style="left:9px;top:84px;width:161px;height:9px"><div class="t" style="left:2px;top:2px">BILL TO</div></div>
  <div class="r tb" style="left:197px;top:84px;width:168px;height:9px"><div class="t" style="left:2px;top:2px">SHIP TO</div></div>
  <div class="t" style="left:10px;top:96px">ATTN: Name / Dept</div><div class="t" style="left:198px;top:96px">ATTN: Name / Dept</div>
  <div class="t" style="left:10px;top:105px">Company Name</div><div class="t" style="left:198px;top:105px">Company Name</div>
  <div class="t" style="left:10px;top:113px">123 Main Street</div><div class="t" style="left:198px;top:113px">123 Main Street</div>
  <div class="t" style="left:198px;top:122px">Hamilton, OH 44416</div><div class="t" style="left:198px;top:131px">(321) 456-7890</div>
  <div class="r tb" style="left:9px;top:150px;width:356px;height:9px"><div class="t" style="left:60px;top:2px">SHIP VIA</div><div class="t" style="left:130px;top:2px">SALESPERSON</div><div class="t" style="left:262px;top:2px">FOB</div><div class="t" style="left:315px;top:2px">TERMS</div></div>
  <div class="r tb" style="left:9px;top:174px;width:356px;height:9px"><div class="t" style="left:5px;top:2px">ITEM NO.</div><div class="t" style="left:95px;top:2px">DESCRIPTION</div><div class="t" style="left:205px;top:2px">QTY</div><div class="t" style="left:250px;top:2px">UNIT PRICE</div><div class="t" style="left:325px;top:2px">TOTAL</div></div>
  <div class="t" style="left:10px;top:187px">A111</div><div class="t" style="left:52px;top:187px">Women's Tall - M</div><div class="t" style="left:220px;top:187px">10</div><div class="t" style="left:250px;top:187px">$</div><div class="t" style="left:288px;top:187px">10.00</div><div class="t" style="left:310px;top:187px">$</div><div class="t" style="left:345px;top:187px">100.00</div>
  <div class="t" style="left:10px;top:195px">B222</div><div class="t" style="left:52px;top:195px">Men's Tall - M</div><div class="t" style="left:221px;top:195px">5</div><div class="t" style="left:250px;top:195px">$</div><div class="t" style="left:288px;top:195px">20.00</div><div class="t" style="left:310px;top:195px">$</div><div class="t" style="left:345px;top:195px">100.00</div>
  <div class="t" style="left:10px;top:204px">C333</div><div class="t" style="left:52px;top:204px">Children's - S</div><div class="t" style="left:220px;top:204px">10</div><div class="t" style="left:250px;top:204px">$</div><div class="t" style="left:290px;top:204px">5.00</div><div class="t" style="left:310px;top:204px">$</div><div class="t" style="left:348px;top:204px">50.00</div>
  <div class="t" style="left:10px;top:213px">D444</div><div class="t" style="left:52px;top:213px">Men's - XL</div><div class="t" style="left:221px;top:213px">5</div><div class="t" style="left:250px;top:213px">$</div><div class="t" style="left:288px;top:213px">10.00</div><div class="t" style="left:310px;top:213px">$</div><div class="t" style="left:348px;top:213px">50.00</div>
  <div class="t" style="left:310px;top:222px">$</div><div class="t" style="left:310px;top:231px">$</div><div class="t" style="left:310px;top:239px">$</div><div class="t" style="left:310px;top:248px">$</div><div class="t" style="left:310px;top:257px">$</div>
  <div class="t" style="left:10px;top:263px">Remarks / Instructions</div>
  <div class="r" style="left:197px;top:263px;width:168px;height:70px;background:#eef7f9"></div>
  <div class="t" style="left:198px;top:266px;font-size:6px">SUBTOTAL</div><div class="t" style="left:310px;top:266px">$</div><div class="t" style="left:345px;top:266px">300.00</div>
  <div class="t" style="left:198px;top:279px;font-size:6px">TAX RATE</div><div class="t" style="left:265px;top:279px;color:#5bb8c8">5.80%</div><div class="t" style="left:310px;top:279px">$</div><div class="t" style="left:348px;top:279px">11.40</div>
  <div class="t" style="left:198px;top:293px;font-size:6px">SHIPPING/HANDLING</div><div class="t" style="left:310px;top:293px">$</div><div class="t" style="left:348px;top:293px">30.00</div>
  <div class="t" style="left:198px;top:306px;font-size:6px">OTHER</div><div class="t" style="left:310px;top:306px">$</div><div class="t" style="left:348px;top:306px">15.00</div>
  <div class="t" style="left:198px;top:319px;font-size:6px">TOTAL</div><div class="t" style="left:310px;top:319px">$</div><div class="t" style="left:345px;top:319px">356.40</div>
  <div class="t" style="left:30px;top:311px;font-style:italic;color:#5bb8c8">Please make check payable to Your Company Name</div>
  <div class="t" style="left:72px;top:320px;font-size:10px;color:#7cc4d0">THANK YOU</div>
  <div class="t c" style="left:188px;top:337px;font-style:italic">For questions concerning this invoice, please contact</div>
  <div class="t c" style="left:188px;top:345px">Name, (321) 456-7890, Email Address</div>
  <div class="t c" style="left:188px;top:356px">www.yourwebaddress.com</div>
  <div class="r" style="left:9px;top:367px;width:356px;height:2px;background:#ccc"></div>
 </div>
 <div class="lab" style="left:7px;top:121px"><span>table 0.5</span></div>
 <div class="lab" style="left:7px;top:148px;height:25px"><span>table 0.7</span></div>
 <div class="bx" style="left:127px;top:149px;width:158px;height:19px"></div>
 <div class="bx" style="left:9px;top:173px;width:356px;height:145px"></div>
</div>

<div class="cell" style="left:792px;top:792px;background:#000">
 <div style="position:absolute;left:100px;top:112px;width:376px;height:376px;transform:scale(.598);transform-origin:0 0">
 <div class="doc">
  <div class="t" style="left:17px;top:5px;font:bold 46px/1 'Liberation Sans',sans-serif;letter-spacing:-1px"><span style="color:#4d148c">Fed</span><span style="color:#ff6600">Ex</span></div>
  <div class="t" style="left:17px;top:66px;font-size:6.5px;color:#5a4a9a">Commercial Invoice</div>
  <div class="r lav" style="left:18px;top:107px;width:334px;height:32px"></div>
  <div class="r lav" style="left:183px;top:148px;width:169px;height:34px"></div>
  <div class="r lav" style="left:18px;top:211px;width:334px;height:72px"></div>
  <div class="r lav" style="left:18px;top:290px;width:334px;height:34px"></div>
  <div class="r ln" style="left:17px;top:86px;width:335px;height:2px"></div>
  <div class="r ln" style="left:17px;top:101px;width:335px;height:1px"></div>
  <div class="r ln" style="left:17px;top:139px;width:335px;height:1px"></div>
  <div class="r ln" style="left:17px;top:182px;width:335px;height:1px"></div>
  <div class="r ln" style="left:17px;top:196px;width:335px;height:2px"></div>
  <div class="r ln" style="left:17px;top:211px;width:335px;height:1px"></div>
  <div class="r ln" style="left:17px;top:283px;width:335px;height:1px"></div>
  <div class="r ln" style="left:17px;top:324px;width:335px;height:1px"></div>
  <div class="r ln" style="left:17px;top:351px;width:335px;height:1px"></div>
  <div class="r ln" style="left:17px;top:86px;width:1px;height:265px"></div>
  <div class="r ln" style="left:352px;top:86px;width:1px;height:265px"></div>
  <div class="r ln" style="left:182px;top:86px;width:1px;height:197px"></div>
  <div class="r ln" style="left:55px;top:196px;width:1px;height:128px"></div>
  <div class="r ln" style="left:79px;top:196px;width:1px;height:128px"></div>
  <div class="r ln" style="left:126px;top:196px;width:1px;height:87px"></div>
  <div class="r ln" style="left:234px;top:196px;width:1px;height:128px"></div>
  <div class="r ln" style="left:264px;top:196px;width:1px;height:128px"></div>
  <div class="r ln" style="left:304px;top:196px;width:1px;height:155px"></div>
 </div></div>
 <div class="bx" style="left:109px;top:227px;width:200px;height:83px"></div>
 <div class="lab" style="left:108px;top:198px"><span>table 0.9</span></div>
</div>

<div class="cell" style="left:1184px;top:792px">
 <div class="doc">
  <div class="t" style="left:270px;top:3px;font:bold 19px/1 'Liberation Sans',sans-serif;color:#2c4a7c;transform:scaleX(.86);transform-origin:0 0">DJ INVOICE</div>
  <div class="t" style="left:263px;top:25px;font-weight:bold;font-size:6px;color:#222">DATE:</div>
  <div class="t" style="left:263px;top:34px;font-weight:bold;font-size:6px;color:#222">INVOICE #</div>
  <div class="t" style="left:263px;top:43px;font-weight:bold;font-size:6px;color:#222">Customer ID</div>
  <div class="r" style="left:310px;top:24px;width:56px;height:7px;background:#dfe6f2"><div class="t c" style="left:30px;top:1px;font-size:5.5px;color:#222">5/29/15</div></div>
  <div class="r" style="left:310px;top:32px;width:55px;height:7px;border:1px solid #333"><div class="t c" style="left:30px;top:1px;font-size:5.5px;color:#222">[123456]</div></div>
  <div class="r" style="left:310px;top:41px;width:55px;height:7px;border:1px solid #333"><div class="t c" style="left:30px;top:1px;font-size:5.5px;color:#222">[123]</div></div>
  <div class="t" style="left:2px;top:12px;font-weight:bold;font-size:8px;color:#222">[Company Name]</div>
  <div class="t" style="left:2px;top:26px;font-size:6px;color:#222">[Company Slogan]</div>
  <div class="t" style="left:2px;top:43px;font-size:6px;color:#222">[Street Address]</div>
  <div class="t" style="left:2px;top:51px;font-size:6px;color:#222">[City, ST ZIP]</div>
  <div class="t" style="left:2px;top:59px;font-size:6px;color:#222">Phone: [000-000-0000]</div>
  <div class="t" style="left:2px;top:68px;font-size:6px;color:#222">Fax: [000-000-0000]</div>
  <div class="r" style="left:2px;top:83px;width:107px;height:8px;background:#2f4777"><div class="t" style="left:1px;top:1px;font-weight:bold;font-size:6px;color:#fff">BILL TO:</div></div>
  <div class="t" style="left:2px;top:93px;font-size:6px;color:#222">[Name]</div>
  <div class="t" style="left:2px;top:101px;font-size:6px;color:#222">[Company Name]</div>
  <svg style="position:absolute;left:140px;top:10px" width="100" height="112" viewBox="0 0 100 112">
   <path d="M28 28 A20 20 0 0 1 68 28" stroke="#343b42" stroke-width="4" fill="none"/>
   <rect x="24" y="22" width="8" height="14" rx="3" fill="#343b42"/>
   <rect x="64" y="22" width="8" height="14" rx="3" fill="#343b42"/>
   <circle cx="48" cy="27" r="14" fill="#343b42"/>
   <path d="M38 50 L58 50 Q66 52 70 64 L82 96 L14 96 L26 64 Q30 52 38 50 Z" fill="#343b42"/>
   <rect x="1" y="86" width="98" height="24" rx="5" fill="#343b42"/>
  </svg>
  <div class="r" style="left:4px;top:140px;width:363px;height:9px;background:#2f4777"><div class="t c" style="left:151px;top:2px;font-weight:bold;font-size:5.5px;color:#fff">DESCRIPTION</div><div class="t c" style="left:335px;top:2px;font-weight:bold;font-size:5.5px;color:#fff">AMOUNT</div></div>
  <div class="r" style="left:310px;top:149px;width:1px;height:123px;background:#4a6a4a"></div>
  <div class="r" style="left:4px;top:272px;width:363px;height:1px;background:#333"></div>
  <div class="t" style="left:263px;top:274px;font-weight:bold;font-size:6px;color:#222">SUBTOTAL</div>
  <div class="r" style="left:2px;top:281px;width:229px;height:59px;border:1px solid #999;box-sizing:border-box"></div>
  <div class="r" style="left:2px;top:281px;width:229px;height:8px;background:#c8c8c8"><div class="t" style="left:1px;top:1px;font-weight:bold;font-size:6px;color:#222">OTHER COMMENTS</div></div>
  <div class="t" style="left:3px;top:291px;font-size:6px;color:#222">1. Total payment due in 30 days</div>
  <div class="t" style="left:3px;top:299px;font-size:6px;color:#222">2. Please include the invoice number on your check</div>
  <div class="t" style="left:263px;top:282px;font-weight:bold;font-size:6px;color:#222">TAX RATE</div><div class="t" style="right:4px;top:282px;font-size:6px;color:#222">0.000%</div>
  <div class="r" style="left:310px;top:290px;width:57px;height:7px;background:#e6ebf4"></div>
  <div class="r" style="left:310px;top:299px;width:57px;height:7px;background:#e6ebf4"></div>
  <div class="r" style="left:310px;top:308px;width:57px;height:8px;background:#e6ebf4"></div>
  <div class="t" style="left:263px;top:290px;font-weight:bold;font-size:6px;color:#222">TAX</div><div class="t" style="left:313px;top:290px;font-size:6px">$</div><div class="t" style="left:355px;top:290px;font-size:6px">-</div>
  <div class="t" style="left:263px;top:299px;font-weight:bold;font-size:6px;color:#222">OTHER</div><div class="t" style="left:313px;top:299px;font-size:6px">$</div><div class="t" style="left:355px;top:299px;font-size:6px">-</div>
  <div class="r" style="left:262px;top:307px;width:105px;height:1px;background:#333"></div>
  <div class="t" style="left:263px;top:309px;font-weight:bold;font-size:7px;color:#222">TOTAL</div><div class="t" style="left:313px;top:309px;font-size:6px">$</div><div class="t" style="left:355px;top:309px;font-size:6px">-</div>
  <div class="t c" style="left:315px;top:324px;font-size:6px;color:#222">Make all checks payable to</div>
  <div class="t c" style="left:315px;top:332px;font-weight:bold;font-size:6px;color:#222">[Your Company Name]</div>
  <div class="t c" style="left:188px;top:357px;font-size:6px;color:#222">If you have any questions about this invoice, please contact</div>
  <div class="t c" style="left:188px;top:365px;font-size:6px;color:#222">[Name, Phone #, E-mail]</div>
 </div>
 <div class="bx" style="left:1px;top:136px;width:369px;height:140px"></div>
 <div class="lab" style="left:1px;top:108px"><span>table 0.9</span></div>
</div>

<!-- ROW 3 -->
<div class="cell" style="left:8px;top:1184px">
 <div class="doc" style="filter:blur(1px)">
  <div class="t" style="left:10px;top:13px;font-weight:bold;font-size:8px;color:#4a7d92">SALES INVOICE TEMPLATE</div>
  <div class="t" style="left:10px;top:24px;font-size:5.5px">Company Name</div>
  <div class="t" style="left:10px;top:33px;font-size:5.5px">123 Main Street</div>
  <div class="t" style="left:10px;top:43px;font-size:5.5px">Hamilton, OH 44416</div>
  <div class="t" style="left:10px;top:53px;font-size:5.5px">(321) 456-7890</div>
  <div class="t" style="left:10px;top:63px;font-size:5.5px">Email Address</div>
  <div class="r tb" style="left:247px;top:18px;width:118px;height:9px"></div>
  <div class="r tb" style="left:247px;top:39px;width:118px;height:9px"></div>
  <div class="r tb" style="left:247px;top:58px;width:118px;height:9px"></div>
  <div class="t c" style="left:306px;top:30px">02/15/18</div><div class="t c" style="left:306px;top:50px">A240</div><div class="t c" style="left:306px;top:70px">1541</div>
  <div class="r tb" style="left:9px;top:84px;width:161px;height:9px"></div>
  <div class="r tb" style="left:197px;top:84px;width:168px;height:9px"></div>
  <div class="t" style="left:10px;top:96px">ATTN: Name / Dept</div><div class="t" style="left:198px;top:96px">ATTN: Name / Dept</div>
  <div class="t" style="left:10px;top:105px">Company Name</div><div class="t" style="left:198px;top:105px">Company Name</div>
  <div class="t" style="left:10px;top:113px">123 Main Street</div><div class="t" style="left:198px;top:113px">123 Main Street</div>
  <div class="t" style="left:198px;top:122px">Hamilton, OH 44416</div><div class="t" style="left:198px;top:131px">(321) 456-7890</div>
  <div class="r tb" style="left:9px;top:150px;width:356px;height:9px"></div>
  <div class="r tb" style="left:9px;top:174px;width:356px;height:9px"></div>
  <div class="t" style="left:10px;top:187px">A111</div><div class="t" style="left:52px;top:187px">Women's Tall - M</div><div class="t" style="left:345px;top:187px">100.00</div>
  <div class="t" style="left:10px;top:195px">B222</div><div class="t" style="left:52px;top:195px">Men's Tall - M</div><div class="t" style="left:345px;top:195px">100.00</div>
  <div class="t" style="left:10px;top:204px">C333</div><div class="t" style="left:52px;top:204px">Children's - S</div><div class="t" style="left:348px;top:204px">50.00</div>
  <div class="t" style="left:10px;top:213px">D444</div><div class="t" style="left:52px;top:213px">Men's - XL</div><div class="t" style="left:348px;top:213px">50.00</div>
  <div class="t" style="left:10px;top:263px">Remarks / Instructions</div>
  <div class="r" style="left:197px;top:263px;width:168px;height:70px;background:#eef7f9"></div>
  <div class="t" style="left:198px;top:266px;font-size:6px">SUBTOTAL</div><div class="t" style="left:198px;top:279px;font-size:6px">TAX RATE</div><div class="t" style="left:198px;top:293px;font-size:6px">SHIPPING/HANDLING</div><div class="t" style="left:198px;top:306px;font-size:6px">OTHER</div><div class="t" style="left:198px;top:319px;font-size:6px">TOTAL</div>
  <div class="t" style="left:72px;top:320px;font-size:10px;color:#7cc4d0">THANK YOU</div>
  <div class="t c" style="left:188px;top:337px;font-style:italic">For questions concerning this invoice, please contact</div>
  <div class="t c" style="left:188px;top:345px">Name, (321) 456-7890, Email Address</div>
  <div class="t c" style="left:188px;top:356px">www.yourwebaddress.com</div>
 </div>
 <div class="lab" style="left:7px;top:119px"><span>table 0.6</span></div>
 <div class="lab" style="left:7px;top:146px;height:26px"><span>table 0.8</span></div>
 <div class="bx" style="left:127px;top:148px;width:158px;height:18px"></div>
 <div class="bx" style="left:7px;top:172px;width:359px;height:164px"></div>
</div>

<div class="cell" style="left:400px;top:1184px">
 <div style="position:absolute;left:0;top:0;width:376px;height:376px;transform:scaleX(-1)">
 <div class="doc">
  <div class="t" style="left:17px;top:5px;font:bold 46px/1 'Liberation Sans',sans-serif;letter-spacing:-1px"><span style="color:#4d148c">Fed</span><span style="color:#ff6600">Ex</span></div>
  <div class="t" style="left:17px;top:66px;font-size:6.5px;color:#5a4a9a">Commercial Invoice</div>
  <div class="r lav" style="left:18px;top:107px;width:334px;height:32px"></div>
  <div class="r lav" style="left:183px;top:148px;width:169px;height:34px"></div>
  <div class="r lav" style="left:18px;top:211px;width:334px;height:72px"></div>
  <div class="r lav" style="left:18px;top:290px;width:334px;height:34px"></div>
  <div class="r ln" style="left:17px;top:86px;width:335px;height:2px"></div>
  <div class="r ln" style="left:17px;top:101px;width:335px;height:1px"></div>
  <div class="r ln" style="left:17px;top:139px;width:335px;height:1px"></div>
  <div class="r ln" style="left:17px;top:154px;width:165px;height:1px"></div>
  <div class="r ln" style="left:17px;top:168px;width:165px;height:1px"></div>
  <div class="r ln" style="left:17px;top:182px;width:335px;height:1px"></div>
  <div class="r ln" style="left:17px;top:196px;width:335px;height:2px"></div>
  <div class="r ln" style="left:17px;top:211px;width:335px;height:1px"></div>
  <div class="r ln" style="left:17px;top:283px;width:335px;height:1px"></div>
  <div class="r ln" style="left:17px;top:304px;width:335px;height:1px"></div>
  <div class="r ln" style="left:17px;top:324px;width:335px;height:1px"></div>
  <div class="r ln" style="left:17px;top:351px;width:335px;height:1px"></div>
  <div class="r ln" style="left:17px;top:86px;width:1px;height:265px"></div>
  <div class="r ln" style="left:352px;top:86px;width:1px;height:265px"></div>
  <div class="r ln" style="left:182px;top:86px;width:1px;height:197px"></div>
  <div class="r ln" style="left:55px;top:196px;width:1px;height:128px"></div>
  <div class="r ln" style="left:79px;top:196px;width:1px;height:128px"></div>
  <div class="r ln" style="left:126px;top:196px;width:1px;height:87px"></div>
  <div class="r ln" style="left:199px;top:196px;width:1px;height:87px"></div>
  <div class="r ln" style="left:234px;top:196px;width:1px;height:128px"></div>
  <div class="r ln" style="left:264px;top:196px;width:1px;height:128px"></div>
  <div class="r ln" style="left:304px;top:196px;width:1px;height:155px"></div>
  <div class="t" style="left:19px;top:88px;font-size:4.5px">Date of Export</div>
  <div class="t" style="left:184px;top:88px;font-size:4.5px">Export References (i.e. order no., invoice no., etc.)</div>
  <div class="t" style="left:19px;top:103px;font-size:4.5px">Shipper/Exporter (complete name and address)</div>
  <div class="t" style="left:184px;top:103px;font-size:4.5px">Recipient (complete name and address)</div>
  <div class="t" style="left:19px;top:141px;font-size:4.5px">Country of export</div>
  <div class="t" style="left:184px;top:141px;font-size:4.5px">Importer - if other than recipient</div>
  <div class="t" style="left:19px;top:156px;font-size:4.5px">Country of manufacture</div>
  <div class="t" style="left:19px;top:184px;font-size:4.5px">International Air Waybill Number</div>
  <div class="t" style="left:20px;top:334px;font-size:4.5px">Signature of shipper/exporter (type name and title and sign.)  Date:</div>
  <div class="r" style="left:22px;top:343px;width:22px;height:5px;border-radius:3px;background:#ee8080"></div>
  <div class="r" style="left:307px;top:327px;width:5px;height:5px;border:1px solid #555"></div>
  <div class="r" style="left:307px;top:336px;width:5px;height:5px;border:1px solid #555"></div>
  <div class="r" style="left:307px;top:345px;width:5px;height:5px;border:1px solid #555"></div>
 </div></div>
 <div class="bx" style="left:21px;top:189px;width:336px;height:130px"></div>
 <div class="lab" style="left:21px;top:161px"><span>table 0.9</span></div>
</div>

<div class="cell" style="left:792px;top:1184px">
 <div class="doc">
  <div class="t" style="left:17px;top:5px;font:bold 46px/1 'Liberation Sans',sans-serif;letter-spacing:-1px"><span style="color:#4d148c">Fed</span><span style="color:#ff6600">Ex</span></div>
  <div class="t" style="left:17px;top:66px;font-size:6.5px;color:#5a4a9a">Commercial Invoice</div>
  <div class="r lav" style="left:18px;top:107px;width:334px;height:32px"></div>
  <div class="r lav" style="left:183px;top:148px;width:169px;height:34px"></div>
  <div class="r lav" style="left:18px;top:211px;width:334px;height:72px"></div>
  <div class="r lav" style="left:18px;top:290px;width:334px;height:34px"></div>
  <div class="r ln" style="left:17px;top:86px;width:335px;height:2px"></div>
  <div class="r ln" style="left:17px;top:101px;width:335px;height:1px"></div>
  <div class="r ln" style="left:17px;top:139px;width:335px;height:1px"></div>
  <div class="r ln" style="left:17px;top:154px;width:165px;height:1px"></div>
  <div class="r ln" style="left:17px;top:168px;width:165px;height:1px"></div>
  <div class="r ln" style="left:17px;top:182px;width:335px;height:1px"></div>
  <div class="r ln" style="left:17px;top:196px;width:335px;height:2px"></div>
  <div class="r ln" style="left:17px;top:211px;width:335px;height:1px"></div>
  <div class="r ln" style="left:17px;top:283px;width:335px;height:1px"></div>
  <div class="r ln" style="left:17px;top:304px;width:335px;height:1px"></div>
  <div class="r ln" style="left:17px;top:324px;width:335px;height:1px"></div>
  <div class="r ln" style="left:17px;top:351px;width:335px;height:1px"></div>
  <div class="r ln" style="left:17px;top:86px;width:1px;height:265px"></div>
  <div class="r ln" style="left:352px;top:86px;width:1px;height:265px"></div>
  <div class="r ln" style="left:182px;top:86px;width:1px;height:197px"></div>
  <div class="r ln" style="left:55px;top:196px;width:1px;height:128px"></div>
  <div class="r ln" style="left:79px;top:196px;width:1px;height:128px"></div>
  <div class="r ln" style="left:126px;top:196px;width:1px;height:87px"></div>
  <div class="r ln" style="left:199px;top:196px;width:1px;height:87px"></div>
  <div class="r ln" style="left:234px;top:196px;width:1px;height:128px"></div>
  <div class="r ln" style="left:264px;top:196px;width:1px;height:128px"></div>
  <div class="r ln" style="left:304px;top:196px;width:1px;height:155px"></div>
  <div class="t" style="left:19px;top:88px;font-size:4.5px">Date of Export</div>
  <div class="t" style="left:184px;top:88px;font-size:4.5px">Export References (i.e. order no., invoice no., etc.)</div>
  <div class="t" style="left:19px;top:103px;font-size:4.5px">Shipper/Exporter (complete name and address)</div>
  <div class="t" style="left:184px;top:103px;font-size:4.5px">Recipient (complete name and address)</div>
  <div class="t" style="left:19px;top:141px;font-size:4.5px">Country of export</div>
  <div class="t" style="left:184px;top:141px;font-size:4.5px">Importer - if other than recipient</div>
  <div class="t" style="left:19px;top:156px;font-size:4.5px">Country of manufacture</div>
  <div class="t" style="left:184px;top:184px;font-size:4.5px">Currency</div>
  <div class="t" style="left:19px;top:199px;font-size:4px">Marks/Nos</div><div class="t" style="left:57px;top:199px;font-size:4px">No. of Pkgs</div><div class="t" style="left:84px;top:199px;font-size:4px">Type of packaging</div><div class="t" style="left:130px;top:199px;font-size:4px">Full Description</div><div class="t" style="left:185px;top:199px;font-size:4px">Qty</div><div class="t" style="left:240px;top:199px;font-size:4px">Weight</div><div class="t" style="left:268px;top:199px;font-size:4px">Unit Value</div><div class="t" style="left:315px;top:199px;font-size:4px">Total Value</div>
  <div class="t" style="left:57px;top:286px;font-size:4px">Total</div><div class="t" style="left:237px;top:286px;font-size:4px">Total</div><div class="t" style="left:315px;top:286px;font-size:4px">Total</div>
  <div class="t" style="left:20px;top:334px;font-size:4.5px">Signature of shipper/exporter (type name and title and sign.)  Date:</div>
  <div class="r" style="left:22px;top:343px;width:22px;height:5px;border-radius:3px;background:#ee8080"></div>
  <div class="r" style="left:307px;top:327px;width:5px;height:5px;border:1px solid #555"></div>
  <div class="r" style="left:307px;top:336px;width:5px;height:5px;border:1px solid #555"></div>
  <div class="r" style="left:307px;top:345px;width:5px;height:5px;border:1px solid #555"></div>
 </div>
 <div class="lab" style="left:19px;top:146px"><span>table 0.3</span></div>
 <div class="lab" style="left:19px;top:171px;height:15px"><span>table 0.9</span></div>
 <div class="bx" style="left:145px;top:171px;width:158px;height:15px"></div>
 <div class="bx" style="left:14px;top:186px;width:336px;height:133px"></div>
</div>

<div class="cell" style="left:1184px;top:1184px">
 <div class="doc" style="opacity:.8">
  <div class="r" style="left:0;top:0;width:372px;height:71px;background:#7e909d"></div>
  <div class="r" style="left:372px;top:0;width:4px;height:376px;background:#2f3a45"></div>
  <div class="t" style="left:22px;top:26px;font-size:22px;color:#fff">INVOICE</div>
  <div class="t" style="left:207px;top:24px;color:#fff">321 444 1234</div><div class="t" style="left:207px;top:35px;color:#fff">your@email.com</div><div class="t" style="left:207px;top:46px;color:#fff">yourwebsite.com</div>
  <div class="t" style="left:292px;top:24px;color:#fff">1 Your Address</div><div class="t" style="left:292px;top:35px;color:#fff">City, State, Country</div><div class="t" style="left:292px;top:46px;color:#fff">ZIP CODE</div>
  <div class="t" style="left:22px;top:101px;color:#ccc">Billed To</div><div class="t" style="left:22px;top:114px;font-size:6px;color:#444">Client Name</div><div class="t" style="left:22px;top:125px;font-size:6px;color:#444">1 Client Address</div><div class="t" style="left:22px;top:136px;font-size:6px;color:#444">City, State, Country</div><div class="t" style="left:22px;top:146px;font-size:6px;color:#444">ZIP CODE</div>
  <div class="t" style="left:128px;top:101px;color:#ccc">Invoice Number</div><div class="t" style="left:128px;top:114px;font-size:6px;color:#444">000000</div><div class="t" style="left:128px;top:130px;color:#ccc">Date Of Issue</div><div class="t" style="left:128px;top:145px;font-size:6px;color:#444">10/07/14</div>
  <div class="t" style="right:26px;top:111px;font-size:20px;color:#8a9aa6">$4520.00</div>
  <div class="r" style="left:22px;top:185px;width:330px;height:2px;background:#c6ced4"></div>
  <div class="t" style="left:22px;top:194px;color:#ccc">Description</div><div class="t" style="left:200px;top:194px;color:#ccc">Unit Cost</div><div class="t" style="left:262px;top:194px;color:#ccc">Qty / Hr Rate</div><div class="t" style="right:26px;top:194px;color:#ccc">Amount</div>
  <div class="t" style="left:22px;top:214px;font-size:6px;color:#444">Your item Name</div><div class="t" style="left:205px;top:214px;color:#444">$1000</div><div class="t" style="left:290px;top:214px;color:#444">1</div><div class="t" style="left:335px;top:214px;color:#444">1000</div>
  <div class="t" style="left:22px;top:243px;font-size:6px;color:#444">Your item Name</div><div class="t" style="left:205px;top:243px;color:#444">$1000</div><div class="t" style="left:290px;top:243px;color:#444">1</div><div class="t" style="left:335px;top:243px;color:#444">1000</div>
  <div class="t" style="left:22px;top:272px;font-size:6px;color:#444">Your item Name</div><div class="t" style="left:205px;top:272px;color:#444">$1000</div><div class="t" style="left:290px;top:272px;color:#444">1</div><div class="t" style="left:335px;top:272px;color:#444">1000</div>
  <div class="t" style="left:22px;top:301px;font-size:6px;color:#444">Your item Name</div><div class="t" style="left:205px;top:301px;color:#444">$1000</div><div class="t" style="left:290px;top:301px;color:#444">1</div><div class="t" style="left:335px;top:301px;color:#444">1000</div>
  <div class="t" style="left:262px;top:354px;color:#ccc">Subtotal</div><div class="t" style="left:320px;top:354px;color:#444">$4000.00</div>
  <div class="t" style="left:270px;top:368px;color:#ccc">Tax</div><div class="t" style="left:322px;top:368px;color:#444">$520.00</div>
 </div>
 <div class="bx" style="left:16px;top:182px;width:338px;height:139px"></div>
 <div class="lab" style="left:16px;top:153px"><span>table 0.8</span></div>
</div>

<!-- TITLES -->
<div class="ttl" style="left:5px;top:6px;color:#f4f4f4">Invoice_49_affine_translation.jpg</div>
<div class="ttl" style="left:397px;top:6px">Invoice_48_brightness.jpg</div>
<div class="ttl" style="left:789px;top:6px">Invoice_47_gaussianblur.jpg</div>
<div class="ttl" style="left:1181px;top:6px">Invoice_46_horizontallyflip.jpg</div>
<div class="ttl" style="left:5px;top:398px">Invoice_49.jpg</div>
<div class="ttl" style="left:397px;top:398px;color:#f4f4f4">Invoice_48_affine_translation.jpg</div>
<div class="ttl" style="left:789px;top:398px">Invoice_47_brightness.jpg</div>
<div class="ttl" style="left:1181px;top:398px">Invoice_46_gaussianblur.jpg</div>
<div class="ttl" style="left:5px;top:790px">Invoice_48_horizontallyflip.jpg</div>
<div class="ttl" style="left:397px;top:790px">Invoice_48.jpg</div>
<div class="ttl" style="left:789px;top:790px;color:#f4f4f4">Invoice_47_affine_translation.jpg</div>
<div class="ttl" style="left:1181px;top:790px">Invoice_43.jpg</div>
<div class="ttl" style="left:5px;top:1182px">Invoice_48_gaussianblur.jpg</div>
<div class="ttl" style="left:397px;top:1182px">Invoice_47_horizontallyflip.jpg</div>
<div class="ttl" style="left:789px;top:1182px">Invoice_47.jpg</div>
<div class="ttl" style="left:1181px;top:1182px">Invoice_46_brightness.jpg</div>

</div></body></html>
